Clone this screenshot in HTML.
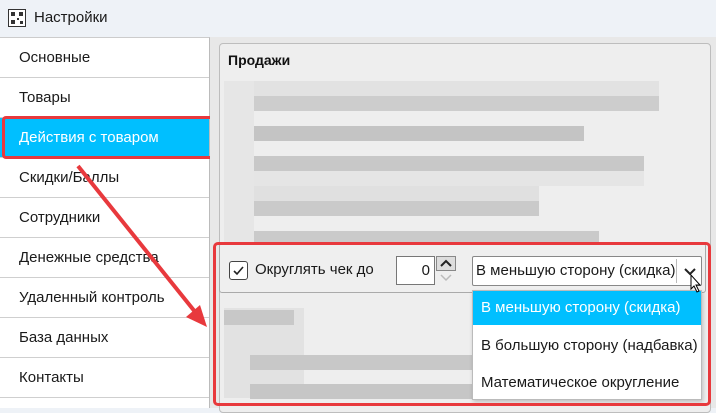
<!DOCTYPE html>
<html><head><meta charset="utf-8"><style>
*{box-sizing:border-box;margin:0;padding:0}
body{width:716px;height:408px;overflow:hidden;background:#eef2f7;font-family:"Segoe UI","Liberation Sans","DejaVu Sans",sans-serif;font-size:15px;color:#1a1a1a;position:relative}
.a{position:absolute}
.item{position:absolute;left:0;width:209px;height:40px;border-bottom:1px solid #cfcfcf;padding-left:19px;line-height:39px;background:#fff}
.b{position:absolute;height:15px}
</style></head><body>
<svg class="a" style="left:8px;top:9px" width="18" height="18"><rect x="0.5" y="0.5" width="17" height="17" fill="#fff" stroke="#333"/><rect x="3" y="3" width="4" height="4" fill="#333"/><rect x="11" y="3" width="4" height="4" fill="#333"/><rect x="3" y="11" width="4" height="4" fill="#333"/><rect x="9" y="9" width="2" height="2" fill="#333"/><rect x="12" y="12" width="3" height="3" fill="#333"/></svg>
<div class="a" style="left:34px;top:9px;font-size:15px">Настройки</div>
<div class="a" style="left:0;top:37px;width:210px;height:371px;background:#fff;border-right:1px solid #bbb;border-top:1px solid #ccc"></div>
<div class="item" style="top:38px">Основные</div>
<div class="item" style="top:78px">Товары</div>
<div class="item" style="top:118px;background:#00bfff;color:#fff">Действия с товаром</div>
<div class="item" style="top:158px">Скидки/Баллы</div>
<div class="item" style="top:198px">Сотрудники</div>
<div class="item" style="top:238px">Денежные средства</div>
<div class="item" style="top:278px">Удаленный контроль</div>
<div class="item" style="top:318px">База данных</div>
<div class="item" style="top:358px">Контакты</div>
<div class="a" style="left:2px;top:116px;width:212px;height:43px;border:3px solid #e8393d;border-radius:4px"></div>
<div class="a" style="left:210px;top:37px;width:506px;height:371px;background:#e8e8e8"></div>
<div class="a" style="left:219px;top:43px;width:492px;height:370px;background:#eeeeee;border:1px solid #bdbdbd;border-radius:4px"></div>
<div class="a" style="left:228px;top:52px;font-weight:bold;font-size:14px;color:#111">Продажи</div>
<div class="a" style="left:224px;top:81px;width:30px;height:165px;background:#e6e6e6"></div>
<div class="b" style="left:254px;top:81px;width:405px;background:#e2e2e2"></div>
<div class="b" style="left:254px;top:96px;width:405px;background:#cdcdcd"></div>
<div class="b" style="left:254px;top:126px;width:330px;background:#c4c4c4"></div>
<div class="b" style="left:254px;top:156px;width:390px;background:#c8c8c8"></div>
<div class="b" style="left:254px;top:171px;width:390px;background:#e5e5e5"></div>
<div class="b" style="left:254px;top:186px;width:285px;background:#e0e0e0"></div>
<div class="b" style="left:254px;top:201px;width:285px;background:#cacaca"></div>
<div class="b" style="left:254px;top:231px;width:345px;background:#cacaca"></div>
<div class="a" style="left:219px;top:243px;width:487px;height:50px;background:#efefef;border:1px solid #aaa;border-radius:3px"></div>
<div class="a" style="left:229px;top:261px;width:19px;height:19px;border:1px solid #444;border-radius:3px;background:#fff"></div>
<svg class="a" style="left:229px;top:261px" width="19" height="19"><path d="M5 10 l3 3 l6 -7" fill="none" stroke="#222" stroke-width="1.6"/></svg>
<div class="a" style="left:255px;top:261px">Округлять чек до</div>
<div class="a" style="left:396px;top:256px;width:39px;height:29px;background:#fff;border:1px solid #777;text-align:right;padding-right:4px;line-height:27px">0</div>
<div class="a" style="left:436px;top:256px;width:20px;height:15px;background:#ddd;border:1px solid #888"></div>
<svg class="a" style="left:436px;top:256px" width="20" height="29"><path d="M5 10 l5 -5 l5 5" fill="none" stroke="#222" stroke-width="2"/><path d="M5 19 l5 5 l5 -5" fill="none" stroke="#bbb" stroke-width="1.5"/></svg>
<div class="a" style="left:472px;top:256px;width:230px;height:30px;background:#fff;border:1px solid #888;border-radius:2px;padding-left:3px;line-height:28px">В меньшую сторону (скидка)</div>
<div class="a" style="left:676px;top:259px;width:1px;height:24px;background:#bbb"></div>
<svg class="a" style="left:680px;top:262px" width="20" height="18"><path d="M5 7 l5 5 l5 -5" fill="none" stroke="#222" stroke-width="2"/></svg>
<div class="a" style="left:224px;top:308px;width:80px;height:90px;background:#e2e2e2"></div>
<div class="b" style="left:224px;top:310px;width:70px;background:#c8c8c8"></div>
<div class="b" style="left:250px;top:355px;width:222px;background:#c8c8c8"></div>
<div class="b" style="left:250px;top:384px;width:222px;background:#c6c6c6"></div>
<div class="a" style="left:472px;top:290px;width:230px;height:110px;background:#fff;border:1px solid #bbb;box-shadow:1px 2px 4px rgba(0,0,0,.2)"></div>
<div class="a" style="left:473px;top:291px;width:228px;height:34px;background:#00bfff;color:#fff;padding-left:8px;line-height:33px">В меньшую сторону (скидка)</div>
<div class="a" style="left:481px;top:337px">В большую сторону (надбавка)</div>
<div class="a" style="left:481px;top:374px">Математическое округление</div>
<div class="a" style="left:213px;top:242px;width:498px;height:164px;border:3px solid #e8393d;border-radius:5px"></div>
<svg class="a" style="left:0;top:0" width="716" height="408"><line x1="78" y1="166" x2="200" y2="318" stroke="#e8393d" stroke-width="4"/><polygon points="207,327 186,317 200,305" fill="#e8393d"/><path d="M691 275 l0 14 l3 -3 l3 6 l2 -1 l-3 -6 l4 0 z" fill="#fff" stroke="#000" stroke-width="1"/></svg>
</body></html>
